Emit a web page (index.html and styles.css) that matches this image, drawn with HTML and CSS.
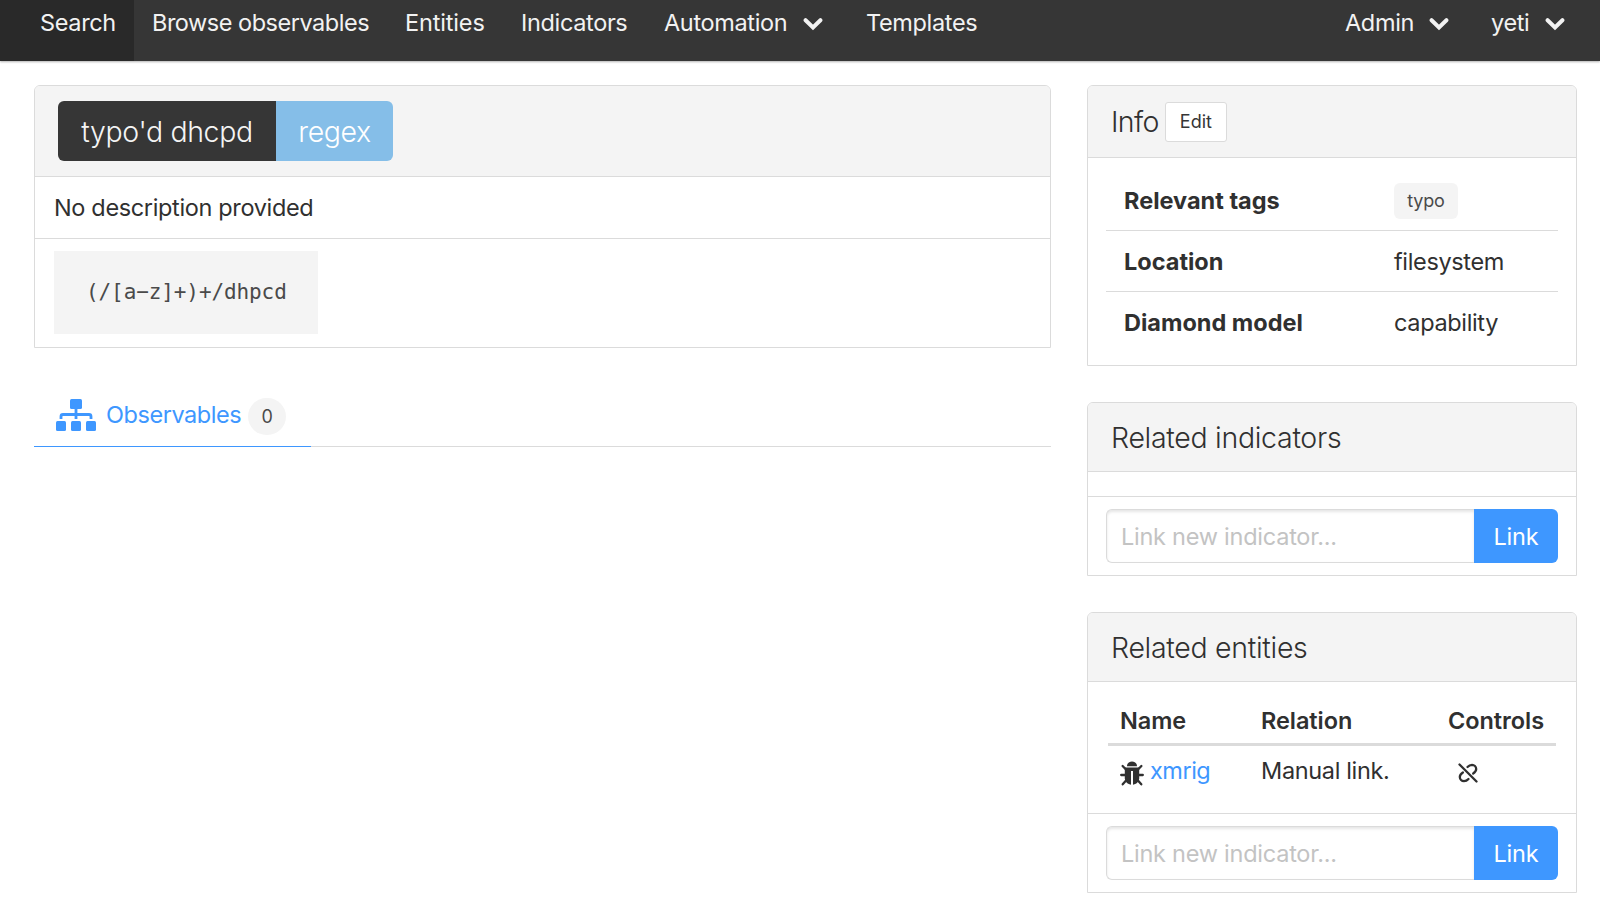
FILE: index.html
```
<!DOCTYPE html>
<html lang="en">
<head>
<meta charset="utf-8">
<title>Yeti</title>
<link rel="stylesheet" href="styles.css">
</head>
<body>
<svg class="defs" width="0" height="0">
  <symbol id="chevron" viewBox="0 0 20 14"><path d="M2.600 3.200 10 10.400l7.400-7.200" fill="none" stroke="currentColor" stroke-width="4" stroke-linecap="round"/></symbol>
</svg>
<nav class="navbar">
  <a class="nav-item active">Search</a>
  <a class="nav-item browse">Browse observables</a>
  <a class="nav-item entities">Entities</a>
  <a class="nav-item indicators">Indicators</a>
  <a class="nav-item automation">Automation <svg class="chevron"><use href="#chevron"/></svg></a>
  <a class="nav-item templates">Templates</a>
  <a class="nav-item admin">Admin <svg class="chevron"><use href="#chevron"/></svg></a>
  <a class="nav-item user">yeti <svg class="chevron"><use href="#chevron"/></svg></a>
</nav>
<div class="columns">
  <main class="main">
    <section class="panel">
      <div class="panel-heading title-heading">
        <span class="tag-name">typo'd dhcpd</span><span class="tag-type">regex</span>
      </div>
      <div class="description">No description provided</div>
      <div class="pattern"><pre class="code">(/[a−z]+)+/dhpcd</pre></div>
    </section>
    <div class="tabs">
      <a class="tab">
        <svg class="sitemap" viewBox="0 0 40 32" fill="currentColor">
          <rect x="14" y="0" width="12" height="10" rx="1.500"/>
          <rect x="0" y="22" width="10" height="10" rx="1.500"/>
          <rect x="15" y="22" width="10" height="10" rx="1.500"/>
          <rect x="30" y="22" width="10" height="10" rx="1.500"/>
          <path d="M20 9v11M5 20v-2.500q0-2 2-2h26q2 0 2 2V20" fill="none" stroke="currentColor" stroke-width="2.800"/>
        </svg>
        <span class="tab-label">Observables</span>
        <span class="count">0</span>
      </a>
    </div>
  </main>
  <aside class="side">
    <section class="panel info">
      <div class="panel-heading info-heading">Info <button class="edit">Edit</button></div>
      <div class="info-body">
        <div class="info-row"><b>Relevant tags</b><span class="tag">typo</span></div>
        <div class="info-row"><b>Location</b><span>filesystem</span></div>
        <div class="info-row"><b>Diamond model</b><span>capability</span></div>
      </div>
    </section>
    <section class="panel">
      <div class="panel-heading">Related indicators</div>
      <div class="empty"></div>
      <div class="link-form"><input class="input" placeholder="Link new indicator..."><button class="link-btn">Link</button></div>
    </section>
    <section class="panel">
      <div class="panel-heading">Related entities</div>
      <div class="entities-body">
        <div class="row head"><span>Name</span><span>Relation</span><span>Controls</span></div>
        <div class="row">
          <span class="entity"><svg class="bug" viewBox="0 0 24 25" fill="currentColor">
            <path d="M7 5.200C7 2.300 9.100.4 12 .4s5 1.900 5 4.800z"/>
            <path d="M4.800 6.600h14.400v11.200q-1.200 5.400-6.200 5.900V10h-2v13.700q-5-.5-6.200-5.900z"/>
            <path d="M6 8.500 2.600 5M18 8.500l3.400-3.500M6 14H1.200M18 14h4.800M6.500 19l-3.800 4.300M17.500 19l3.800 4.300" fill="none" stroke="currentColor" stroke-width="2.300" stroke-linecap="round"/>
          </svg><a class="entity-link">xmrig</a></span>
          <span>Manual link.</span>
          <span class="control"><svg class="unlink" viewBox="0 0 20 20" fill="none" stroke="currentColor" stroke-width="2.300" stroke-linecap="round">
            <path d="M1.500 1.500l17 17"/>
            <path d="M9.500 4Q11.500 1.800 14 1.800A4.300 4.300 0 0 1 18.200 6Q18.200 8.400 15.200 10.500"/>
            <path d="M4.900 9.500Q1.800 11.600 1.800 14A4.300 4.300 0 0 0 6 18.200Q8.500 18.200 10.500 16"/>
          </svg></span>
        </div>
      </div>
      <div class="link-form"><input class="input" placeholder="Link new indicator..."><button class="link-btn">Link</button></div>
    </section>
  </aside>
</div>
</body>
</html>
```
FILE: styles.css
```
* { box-sizing: border-box; }
body {
  margin: 0;
  height: 912px;
  overflow: hidden;
  background: #fff;
  color: #303030;
  font-family: Inter, "Liberation Sans", sans-serif;
  font-size: 23.5px;
  letter-spacing: -0.35px;
  line-height: 36px;
}
.defs { display: none; }
.navbar {
  display: flex;
  height: 61px;
  padding-left: 22px;
  background: linear-gradient(90deg, #292929 22px, #363636 22px);
  color: #f2f2f2;
  box-shadow: 0 1px 2px rgba(0, 0, 0, .3);
}
.nav-item {
  display: flex;
  padding: 5px 0 0 18px;
  white-space: nowrap;
}
.active { width: 112px; background: #292929; }
.browse { width: 253px; letter-spacing: -0.48px; }
.entities { width: 116px; letter-spacing: -0.15px; }
.indicators { width: 143px; }
.automation { width: 202px; }
.admin { width: 146px; margin-left: auto; }
.user { width: 127px; }
.chevron { width: 20px; height: 14px; margin: 12px 0 0 auto; }
.automation .chevron { margin-right: 25px; }
.admin .chevron { margin-right: 24px; }
.user .chevron { margin-right: 35px; }
.columns { display: flex; gap: 36px; padding: 24px 22px 0 34px; }
.main { width: 1017px; }
.side { width: 490px; }
.panel { margin-bottom: 36px; border: 1px solid #dbdbdb; border-radius: 6px 6px 0 0; }
.panel-heading {
  display: flex;
  align-items: center;
  height: 69px;
  padding: 2px 23px 0;
  border-bottom: 1px solid #dbdbdb;
  border-radius: 5px 5px 0 0;
  background: #f4f4f4;
  font-size: 28.500px;
  font-weight: 300;
  letter-spacing: -0.3px;
}
.title-heading { height: 91px; padding-top: 0; letter-spacing: -0.4px; }
.tag-name, .tag-type { display: flex; align-items: center; justify-content: center; height: 60px; padding-top: 2px; }
.tag-name { width: 218px; border-radius: 6px 0 0 6px; background: #363636; color: #f4f4f4; }
.tag-type { width: 117px; border-radius: 0 6px 6px 0; background: #85bee8; color: #fff; }
.description { height: 62px; padding: 13px 19px; border-bottom: 1px solid #dbdbdb; }
.pattern { padding: 12px 18px 13px 19px; }
.code { width: 264px; height: 83px; margin: 0; padding: 24px 32px; background: #f4f4f4; color: #4a4a4a; font: 21px/35px "DejaVu Sans Mono", monospace; letter-spacing: -0.1px; }
.tabs { display: flex; height: 63px; border-bottom: 1px solid #dbdbdb; }
.tab { display: flex; width: 277px; height: 63px; padding: 15px 22px 0; border-bottom: 1px solid #3e97ff; color: #3e97ff; }
.sitemap { width: 40px; height: 32px; margin-right: 10px; }
.tab-label { width: 142px; line-height: 32px; letter-spacing: -0.45px; }
.count { width: 38px; height: 37px; margin-top: -1px; border-radius: 19px; background: #f4f4f4; color: #4a4a4a; font-size: 18px; line-height: 37px; text-align: center; }
.info-heading { height: 72px; padding-top: 0; letter-spacing: -0.6px; }
.edit { width: 62px; height: 40px; margin: 0 0 0 6px; padding: 0; border: 1px solid #dbdbdb; border-radius: 3px; background: #fff; color: #363636; font: 18px Inter, sans-serif; }
.info-body { height: 207px; padding: 12px 18px; }
.info-row { display: grid; grid-template-columns: 270px 1fr; align-items: center; height: 61px; padding: 1px 18px 0 18px; border-bottom: 1px solid #dbdbdb; }
.info-row:last-child { border-bottom: 0; }
b { font-weight: 700; letter-spacing: 0; }
.head { font-weight: 600; letter-spacing: -0.05px; }
.tag { width: 64px; height: 36px; border-radius: 6px; background: #f4f4f4; color: #4a4a4a; font-size: 18px; letter-spacing: -0.2px; text-align: center; }
.empty { height: 25px; border-bottom: 1px solid #dbdbdb; }
.link-form { display: flex; height: 78px; padding: 12px 18px; }
.input { width: 368px; height: 54px; padding: 0 14px; border: 1px solid #dbdbdb; border-right: 0; border-radius: 6px 0 0 6px; outline: 0; font: inherit; letter-spacing: -0.25px; box-shadow: inset 0 2px 3px rgba(0, 0, 0, .1); }
.input::placeholder { color: #c3c3c3; }
.link-btn { width: 84px; height: 54px; padding: 1px 0 0; border: 0; border-radius: 0 6px 6px 0; background: #3e97ff; color: #fff; font: inherit; letter-spacing: -0.2px; }
.entities-body { height: 132px; padding: 14px 20px; border-bottom: 1px solid #dbdbdb; }
.row { display: grid; grid-template-columns: 141px 187px 1fr; height: 50px; padding: 7px 0 0 12px; }
.head { border-bottom: 3px solid #dbdbdb; }
.entity { display: flex; }
.bug { width: 24px; height: 25px; margin: 8px 6px 0 0; }
.entity-link { color: #3e97ff; letter-spacing: -0.5px; }
.unlink { width: 20px; height: 20px; margin: 10px 0 0 10px; }
.control { display: flex; }
```
